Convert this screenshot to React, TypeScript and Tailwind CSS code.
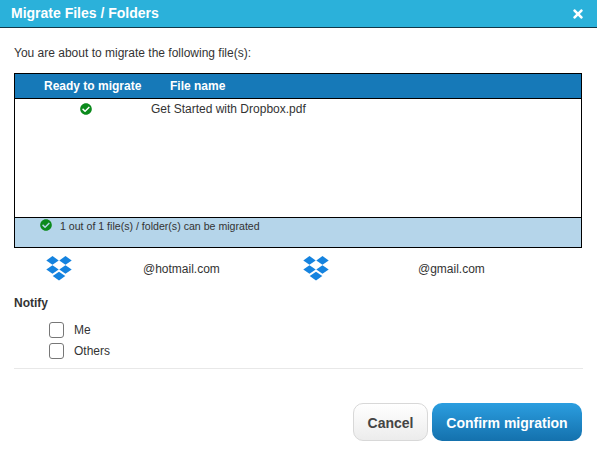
import { FaCheckCircle, FaTimes } from "react-icons/fa"

const NOTIFY = ["Me", "Others"]

function DropboxLogo() {
  return (
    <svg viewBox="0 0 26 26" className="ml-[32px] h-[26px] w-[26px] shrink-0 fill-[#1583df]">
      <polygon points="6.5,1 12.7,5.5 6.5,9.7 0.3,5.5" />
      <polygon points="19.5,1 25.7,5.5 19.5,9.7 13.3,5.5" />
      <polygon points="6.5,10.3 12.7,14.5 6.5,18.7 0.3,14.5" />
      <polygon points="19.5,10.3 25.7,14.5 19.5,18.7 13.3,14.5" />
      <polygon points="13,16.8 19.3,21 13,25.4 6.7,21" />
    </svg>
  )
}

function Account({ email, textClass }: { email: string; textClass: string }) {
  return (
    <div className="flex w-[257px] items-center">
      <DropboxLogo />
      <span className={`mt-[2px] whitespace-nowrap text-[12px] text-[#333] ${textClass}`}>{email}</span>
    </div>
  )
}

export default function App() {
  return (
    <div className="flex h-[454px] w-[597px] flex-col bg-white font-['Liberation_Sans',Arial,sans-serif] text-[#333]">
      <div className="flex h-[28px] shrink-0 items-center justify-between border-b border-[#12384a] bg-[#2bb1da] pl-[11px] pr-[12px]">
        <h1 className="text-[14px] font-bold text-white">Migrate Files / Folders</h1>
        <FaTimes className="h-[14px] w-[14px] text-white" />
      </div>

      <div className="flex flex-1 flex-col px-[14px]">
        <p className="mt-[18px] h-[14px] text-[12px] leading-[14px]">You are about to migrate the following file(s):</p>

        <div className="mt-[13px] flex h-[175px] w-[568px] flex-col border border-black">
          <div className="flex h-[25px] shrink-0 items-center border-b border-black bg-[#1679b8] text-[12px] font-bold text-white">
            <span className="ml-[29px] w-[126px]">Ready to migrate</span>
            <span>File name</span>
          </div>
          <div className="flex flex-1 items-start pt-[3px]">
            <div className="flex w-[136px] justify-center pl-[6px] pt-[1px]">
              <FaCheckCircle className="h-[12px] w-[12px] text-[#0b8a1c]" />
            </div>
            <span className="text-[12px] leading-[14px]">Get Started with Dropbox.pdf</span>
          </div>
          <div className="flex h-[30px] shrink-0 items-start border-t border-black bg-[#b5d5ea] pl-[25px] pt-[1px]">
            <FaCheckCircle className="h-[12px] w-[12px] text-[#0b8a1c]" />
            <span className="ml-[8px] mt-[1px] text-[10.6px] leading-[13px]">1 out of 1 file(s) / folder(s) can be migrated</span>
          </div>
        </div>

        <div className="mt-[6px] flex h-[28px]">
          <Account email="@hotmail.com" textClass="ml-[71px]" />
          <Account email="@gmail.com" textClass="ml-[89px]" />
        </div>

        <h2 className="mt-[14px] h-[14px] text-[12px] font-bold leading-[14px]">Notify</h2>

        <div className="mt-[12px] flex flex-col gap-[5px] pl-[35px]">
          {NOTIFY.map((label) => (
            <label key={label} className="flex h-[16px] items-center">
              <span className="h-[16px] w-[15px] rounded-[3px] border border-[#777] bg-white" />
              <span className="ml-[10px] text-[12px]">{label}</span>
            </label>
          ))}
        </div>

        <div className="mt-[9px] h-px bg-[#e8e8e8]" />

        <div className="mr-[1px] mt-[34px] flex justify-end gap-[4px]">
          <button className="h-[38px] w-[75px] rounded-[10px] border border-[#d8d8d8] bg-gradient-to-b from-white to-[#ececec] pt-[2px] text-[14px] font-bold text-[#444]">
            Cancel
          </button>
          <button className="h-[38px] w-[150px] rounded-[10px] bg-gradient-to-b from-[#2b9ee0] to-[#1471ad] pt-[2px] text-[14px] font-bold text-white">
            Confirm migration
          </button>
        </div>
      </div>
    </div>
  )
}
